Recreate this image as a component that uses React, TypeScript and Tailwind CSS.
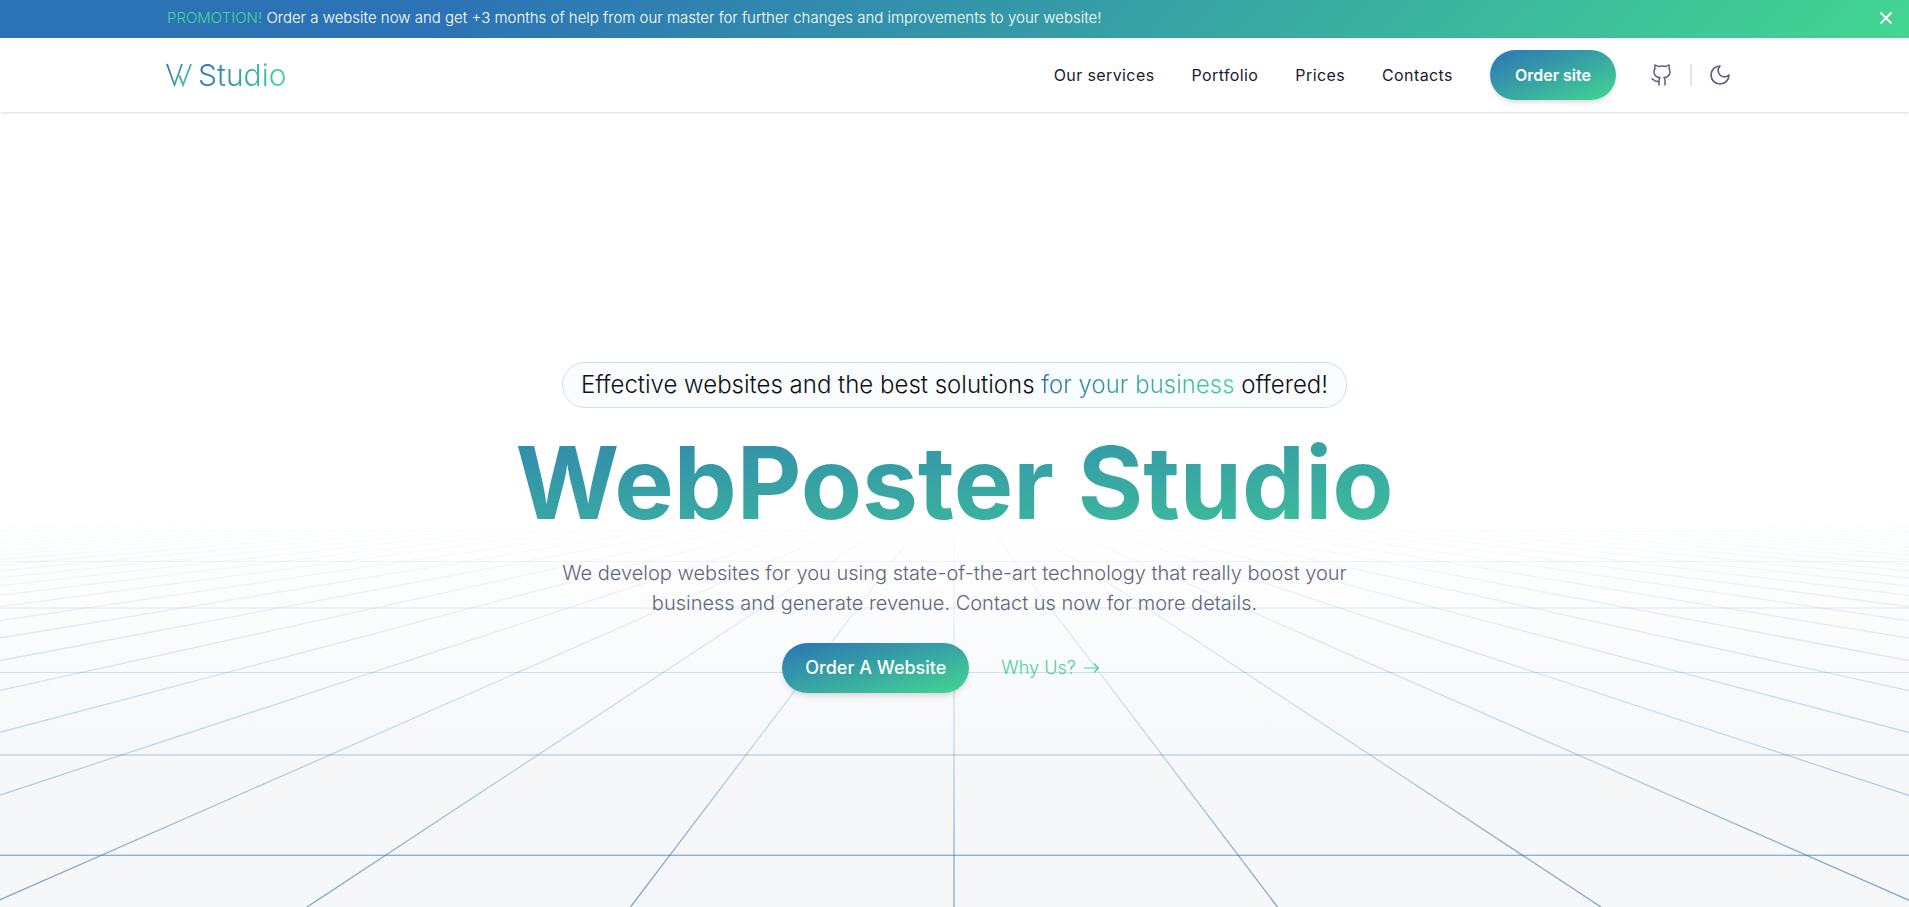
const grad = 'bg-[linear-gradient(to_bottom_right,#2c73b5,#43d692)]';
const gradText = 'bg-clip-text text-transparent';

const CENTER = 954;
const HORIZON = 481;
const RAY_SLOPE = 0.7594;
const RAYS = Array.from({ length: 61 }, (_, i) => i - 30);
const ROWS = [
  { y: 531, h: 1, opacity: 0.02 },
  { y: 561, h: 1, opacity: 0.07 },
  { y: 607, h: 2, opacity: 0.07 },
  { y: 672, h: 1, opacity: 0.2 },
  { y: 754, h: 2, opacity: 0.2 },
  { y: 854, h: 1, opacity: 0.18 },
  { y: 855, h: 1, opacity: 0.55 },
];

function PerspectiveGrid() {
  return (
    <svg
      className="absolute inset-x-0 bottom-0 h-[407px] w-full"
      viewBox="0 500 1909 407"
      preserveAspectRatio="xMidYMax slice"
      aria-hidden="true"
    >
      <defs>
        <linearGradient id="grid-fade" gradientUnits="userSpaceOnUse" x1="0" y1="520" x2="0" y2="907">
          <stop offset="0" stopColor="#2c73b5" stopOpacity="0" />
          <stop offset="0.23" stopColor="#2c73b5" stopOpacity="0.1" />
          <stop offset="0.4" stopColor="#2c73b5" stopOpacity="0.18" />
          <stop offset="0.61" stopColor="#2c73b5" stopOpacity="0.28" />
          <stop offset="0.86" stopColor="#2c73b5" stopOpacity="0.54" />
          <stop offset="1" stopColor="#2c73b5" stopOpacity="0.62" />
        </linearGradient>
      </defs>
      <g stroke="url(#grid-fade)" strokeWidth="1.3">
        {RAYS.map((k) => (
          <line
            key={k}
            x1={CENTER + k * RAY_SLOPE * (520 - HORIZON)}
            y1="520"
            x2={CENTER + k * RAY_SLOPE * (907 - HORIZON) + 0.01}
            y2="907"
          />
        ))}
      </g>
      <g fill="#2c73b5">
        {ROWS.map(({ y, h, opacity }) => (
          <rect key={y} x="0" y={y} width="1909" height={h} fillOpacity={opacity} />
        ))}
      </g>
    </svg>
  );
}

export default function App() {
  return (
    <div className="relative flex min-h-screen flex-col bg-white font-['Inter',sans-serif] text-[#1a202c]">
      <aside className="flex h-[38px] items-center justify-between bg-[linear-gradient(135deg,#2c73b5_24%,#43d692)] pr-4 pb-0.5 pl-[167px] text-[15px] font-light text-white">
        <p>
          <span className="text-[#43d692]">PROMOTION!</span> Order a website now and get +3 months of
          help from our master for further changes and improvements to your website!
        </p>
        <button type="button" aria-label="Close" className="flex">
          <svg width="14" height="14" viewBox="0 0 14 14" stroke="white" strokeWidth="2">
            <path d="M1.500 1.500l11 11M12.500 1.500l-11 11" />
          </svg>
        </button>
      </aside>
      <header className="z-10 flex h-[74px] items-center justify-between bg-white pr-[177px] pl-[166px] shadow-sm">
        <a href="#home" className="flex items-center gap-1.5 text-3xl font-light">
          <svg width="26" height="24" viewBox="0 0 26 24" fill="none" stroke="url(#logo)" strokeWidth="1.8">
            <defs>
              <linearGradient id="logo" x1="0" y1="0" x2="1" y2="0.6">
                <stop stopColor="#2c73b5" />
                <stop offset="1" stopColor="#48bfa0" />
              </linearGradient>
            </defs>
            <path d="M1 1l7.500 21L16 1M13.500 12.500l3.500 9.500L25 1" />
          </svg>
          <span className={`bg-[linear-gradient(to_right,#2c73b5,#43d692)] ${gradText}`}>Studio</span>
        </a>
        <nav className="flex items-center">
          <div className="flex items-center gap-[37px] text-base tracking-wide">
            <a href="#services">Our services</a>
            <a href="#portfolio">Portfolio</a>
            <a href="#prices">Prices</a>
            <a href="#contacts">Contacts</a>
            <a href="#order" className={`flex h-[50px] items-center rounded-full px-[25px] font-semibold tracking-normal text-white shadow-md ${grad}`}>
              Order site
            </a>
          </div>
          <a href="#github" aria-label="GitHub" className="ml-[34px] text-[#5a6078]">
            <svg width="24" height="24" viewBox="0 0 24 24" fill="none" stroke="currentColor" strokeWidth="1.5" strokeLinecap="round" strokeLinejoin="round">
              <path d="M15 22v-4a4.800 4.800 0 0 0-1-3.500c3 0 6-2 6-5.500.08-1.250-.27-2.480-1-3.500.28-1.150.28-2.350 0-3.500 0 0-1 0-3 1.500-2.640-.5-5.360-.5-8 0C6 2 5 2 5 2c-.3 1.150-.3 2.350 0 3.500A5.403 5.403 0 0 0 4 9c0 3.500 3 5.500 6 5.500-.39.49-.68 1.050-.85 1.650-.17.6-.22 1.230-.15 1.850v4" />
              <path d="M9 18c-4.510 2-5-2-7-2" />
            </svg>
          </a>
          <span className="ml-4 h-[22px] w-0.5 bg-[#e2e8f0]" />
          <button type="button" aria-label="Dark mode" className="ml-4 text-[#5a6078]">
            <svg width="24" height="24" viewBox="0 0 24 24" fill="none" stroke="currentColor" strokeWidth="1.7" strokeLinecap="round" strokeLinejoin="round">
              <path d="M12 3a6 6 0 0 0 9 9 9 9 0 1 1-9-9Z" />
            </svg>
          </button>
        </nav>
      </header>
      <div className="absolute inset-x-0 bottom-0 h-[387px] bg-[linear-gradient(to_bottom,#ffffff,#f5f7f9_65%)]" />
      <PerspectiveGrid />
      <main className="relative flex flex-1 flex-col items-center pt-[250px] text-center">
        <p className="flex h-[46px] items-center rounded-full border border-[#cfdde8] bg-[#f9fdff] px-[18px] text-2xl font-light whitespace-pre text-[#111]">
          Effective websites and the best solutions{' '}
          <span className={`bg-[linear-gradient(to_right,#2c73b5,#43d692)] ${gradText}`}>for your business</span> offered!
        </p>
        <h1 className={`w-full text-[100px] leading-[150px] font-bold ${grad} ${gradText}`}>WebPoster Studio</h1>
        <p className="max-w-[800px] text-xl leading-[30px] font-light text-[#5f677b]">
          We develop websites for you using state-of-the-art technology that really boost your business
          and generate revenue. Contact us now for more details.
        </p>
        <div className="mt-[25px] flex items-center gap-1 text-lg">
          <a href="#order" className={`flex h-[50px] items-center rounded-full px-[23px] font-medium text-white shadow-md ${grad}`}>
            Order A Website
          </a>
          <a href="#why" className="flex items-center gap-2 px-7 font-light text-[#43d692]">
            Why Us?
            <svg width="15" height="12" viewBox="0 0 15 12" fill="none" stroke="currentColor" strokeWidth="1.2">
              <path d="M0 6h14M10 1.500l4.500 4.500-4.500 4.500" />
            </svg>
          </a>
        </div>
      </main>
    </div>
  );
}
